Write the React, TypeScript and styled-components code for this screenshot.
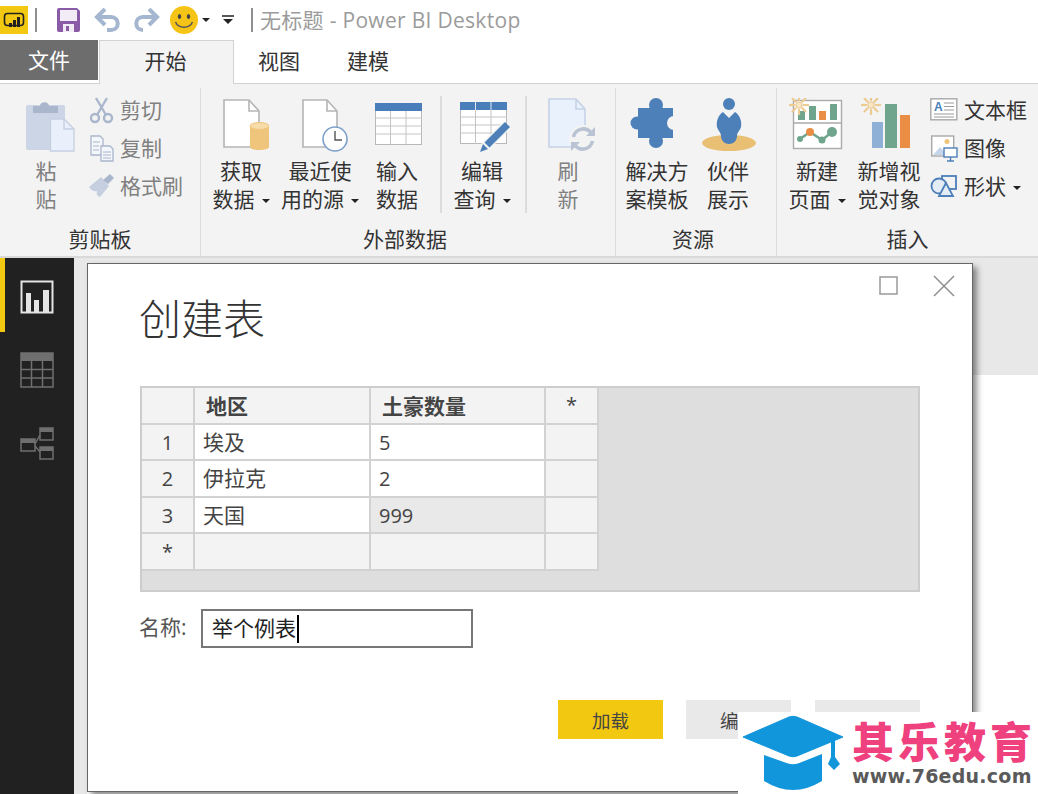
import React from "react";
import styled, { createGlobalStyle } from "styled-components";

const GlobalStyle = createGlobalStyle`
  html, body { margin: 0; padding: 0; background: #fff; }
  body { font-family: "Open Sans", "Noto Sans CJK SC", sans-serif; color: #333; }
  * { box-sizing: border-box; }
`;

const Page = styled.div`
  position: relative;
  width: 1038px;
  height: 794px;
  overflow: hidden;
  display: flex;
  flex-direction: column;
`;

/* title bar */
const TitleBar = styled.div`
  height: 40px;
  display: flex;
  align-items: center;
  background: #fff;
`;
const Slot = styled.div<{ $left: number }>`
  margin-left: ${(p) => p.$left}px;
  display: flex;
  align-items: center;
`;
const BarSep = styled.div<{ $left: number }>`
  width: 2px;
  height: 24px;
  margin-left: ${(p) => p.$left}px;
  background: #8f8f8f;
`;
const WindowTitle = styled.div`
  margin-left: 7px;
  font-size: 21px;
  letter-spacing: 0.3px;
  line-height: 28px;
  color: #9b9b9b;
  white-space: nowrap;
`;

/* tabs */
const TabRow = styled.div`
  height: 44px;
  display: flex;
  align-items: flex-start;
  border-bottom: 1px solid #d2d2d2;
`;
const FileTab = styled.div`
  width: 98px;
  height: 40px;
  background: #6d6d6d;
  color: #fff;
  font-size: 21px;
  line-height: 40px;
  text-align: center;
`;
const HomeTab = styled.div`
  width: 135px;
  height: 44px;
  margin-left: 1px;
  padding-right: 2px;
  background: #f3f3f3;
  border: 1px solid #d2d2d2;
  border-bottom: 0;
  font-size: 21px;
  line-height: 40px;
  text-align: center;
`;
const Tab = styled.div<{ $left: number }>`
  margin-left: ${(p) => p.$left}px;
  font-size: 21px;
  line-height: 42px;
`;

/* ribbon */
const Ribbon = styled.div`
  height: 172px;
  padding-top: 4px;
  display: flex;
  background: #f3f3f3;
`;
const Group = styled.section<{ $width: number; $last?: boolean }>`
  width: ${(p) => p.$width}px;
  display: flex;
  flex-direction: column;
  border-right: ${(p) => (p.$last ? "0" : "1px solid #dcdcdc")};
`;
const GroupBody = styled.div`
  flex: 1;
  padding-top: 8px;
  display: flex;
  align-items: flex-start;
`;
const GroupLabel = styled.div<{ $shift?: number }>`
  height: 28px;
  margin-bottom: 3px;
  padding-right: ${(p) => p.$shift || 0}px;
  font-size: 21px;
  line-height: 28px;
  text-align: center;
  white-space: nowrap;
`;
const BigButton = styled.div<{ $width: number; $muted?: boolean }>`
  width: ${(p) => p.$width}px;
  flex: none;
  display: flex;
  flex-direction: column;
  align-items: center;
  font-size: 21px;
  line-height: 28px;
  text-align: center;
  white-space: nowrap;
  color: ${(p) => (p.$muted ? "#808080" : "#333")};
`;
const IconBox = styled.div`
  height: 61px;
  display: flex;
  align-items: flex-start;
  padding-top: 2px;
`;
const Caret = styled.i`
  display: inline-block;
  width: 0;
  height: 0;
  margin-left: 7px;
  vertical-align: middle;
  border-left: 4px solid transparent;
  border-right: 4px solid transparent;
  border-top: 4px solid #222;
`;
const RibbonSep = styled.div<{ $left: number }>`
  width: 2px;
  height: 117px;
  margin-left: ${(p) => p.$left}px;
  background: #dcdcdc;
`;
const SmallColumn = styled.div<{ $left: number }>`
  margin-left: ${(p) => p.$left}px;
  margin-top: -6px;
  display: flex;
  flex-direction: column;
`;
const SmallRow = styled.div<{ $muted?: boolean }>`
  height: 38px;
  display: flex;
  align-items: center;
  gap: 6px;
  font-size: 21px;
  white-space: nowrap;
  color: ${(p) => (p.$muted ? "#808080" : "#333")};
  svg {
    margin-top: 2px;
  }
`;

/* work area */
const Work = styled.div`
  flex: 1;
  display: flex;
  border-top: 2px solid #d9d9d9;
`;
const Sidebar = styled.nav`
  width: 74px;
  background: #212121;
`;
const SideItem = styled.div<{ $active?: boolean }>`
  height: 73.5px;
  padding-top: 4px;
  display: flex;
  align-items: center;
  justify-content: center;
  box-shadow: ${(p) => (p.$active ? "inset 5px 0 0 #f2c811" : "none")};
`;
const Canvas = styled.div`
  flex: 1;
  padding: 117px 0 0 13px;
  background: #e8e8e8;
`;
const Sheet = styled.div`
  height: 100%;
  background: #fff;
`;

/* dialog */
const Dialog = styled.div`
  position: absolute;
  left: 87px;
  top: 263px;
  width: 886px;
  height: 529px;
  padding: 0 52px;
  background: #fff;
  border: 1px solid #666;
  box-shadow: 4px 4px 6px rgba(0, 0, 0, 0.45);
`;
const DialogControls = styled.div`
  height: 33px;
  margin-right: -35px;
  padding-top: 11px;
  display: flex;
  justify-content: flex-end;
  gap: 35px;
`;
const DialogTitle = styled.h1`
  margin: 0 0 0 -1px;
  height: 89px;
  font-size: 42px;
  font-weight: 300;
  line-height: 44px;
`;
const TableFrame = styled.div`
  width: 780px;
  height: 206px;
  background: #dedede;
  border: 2px solid #cdcdcd;
`;
const Table = styled.div`
  display: inline-grid;
  grid-template-columns: 51px 174px 173px 51px;
  grid-auto-rows: 34.5px;
  gap: 2px;
  padding-right: 2px;
  padding-bottom: 2px;
  background: #d2d2d2;
`;
const Cell = styled.div<{ $tone?: "head" | "fill" | "picked"; $center?: boolean; $bold?: boolean; $num?: boolean }>`
  padding-left: ${(p) => (p.$center ? 0 : p.$bold ? 11 : 8)}px;
  font-size: ${(p) => (p.$num ? 20 : 21)}px;
  line-height: ${(p) => (p.$bold ? 36 : p.$center ? 34 : 35)}px;
  font-weight: ${(p) => (p.$bold ? 700 : 400)};
  text-align: ${(p) => (p.$center ? "center" : "left")};
  color: #444;
  background: ${(p) =>
    p.$tone === "head" || p.$tone === "fill" ? "#f3f3f3" : p.$tone === "picked" ? "#e9e9e9" : "#fff"};
`;
const RowNo = styled(Cell).attrs({ $tone: "head", $center: true, $num: true })`
  line-height: 36px;
`;
const NameRow = styled.div`
  margin-top: 17px;
  display: flex;
  align-items: center;
  font-size: 21px;
  color: #555;
`;
const NameLabel = styled.label`
  width: 62px;
  margin-left: -1px;
  padding-bottom: 5px;
`;
const NameBox = styled.div`
  width: 272px;
  height: 39px;
  padding: 0 0 4px 9px;
  display: flex;
  align-items: center;
  border: 2px solid #777;
  font-size: 21px;
  color: #222;
`;
const TextCaret = styled.span`
  width: 2px;
  height: 28px;
  margin: 4px 0 0 1px;
  background: #000;
`;
const ButtonRow = styled.div`
  margin-top: 52px;
  width: 780px;
  display: flex;
  justify-content: flex-end;
  gap: 24px;
`;
const DialogButton = styled.button<{ $primary?: boolean }>`
  width: 105px;
  height: 39px;
  margin-right: ${(p) => (p.$primary ? -1 : 0)}px;
  padding: 0;
  border: 0;
  font-family: inherit;
  font-size: 18.5px;
  color: #444;
  background: ${(p) => (p.$primary ? "#f2c811" : "#e9e9e9")};
`;

/* watermark */
const Watermark = styled.div`
  position: absolute;
  right: 0;
  bottom: 0;
  width: 300px;
  height: 82px;
  padding-left: 5px;
  display: flex;
  gap: 7px;
  background: #fff;
`;
const BrandMark = styled.svg`
  flex: none;
`;
const BrandText = styled.div`
  padding-top: 6px;
  display: flex;
  flex-direction: column;
`;
const BrandName = styled.div`
  font-size: 42px;
  line-height: 47px;
  font-weight: 900;
  letter-spacing: 4px;
  color: #f0417f;
  white-space: nowrap;
`;
const BrandUrl = styled.div`
  font-family: "DejaVu Sans", sans-serif;
  font-size: 19px;
  line-height: 22px;
  font-weight: 700;
  letter-spacing: 0.25px;
  color: #5a5a5a;
  white-space: nowrap;
`;

const Sun = ({ x, y }: { x: number; y: number }) => (
  <g stroke="#eccb93" strokeWidth="2.2" fill="none">
    <circle cx={x} cy={y} r="3" fill="#f8e8c6" strokeWidth="1.200" />
    {[0, 45, 90, 135, 180, 225, 270, 315].map((a) => (
      <line
        key={a}
        x1={x + 4 * Math.cos((a * Math.PI) / 180)}
        y1={y + 4 * Math.sin((a * Math.PI) / 180)}
        x2={x + 10 * Math.cos((a * Math.PI) / 180)}
        y2={y + 10 * Math.sin((a * Math.PI) / 180)}
      />
    ))}
  </g>
);

const Doc = ({ d, fold, fill = "#fff", stroke = "#b5b5b5" }: { d: string; fold: string; fill?: string; stroke?: string }) => (
  <g fill={fill} stroke={stroke} strokeWidth="1.6">
    <path d={d} />
    <path d={fold} fill="none" />
  </g>
);

const Icon = ({ w = 56, h = 56, children }: { w?: number; h?: number; children: React.ReactNode }) => (
  <svg width={w} height={h} viewBox={`0 0 ${w} ${h}`}>
    {children}
  </svg>
);

const PasteIcon = () => (
  <Icon w={60}>
    <rect x="10" y="7" width="39" height="45" rx="2" fill="#ccd5e6" />
    <path d="M17 8h7c0-5 9-5 9 0h9v7H17z" fill="#aab6cb" />
    <path d="M34.500 21H48l10 10v22H34.500z" fill="#e9f0fb" stroke="#c5d0e2" strokeWidth="1.4" />
    <path d="M48 21v10h10" fill="none" stroke="#c5d0e2" strokeWidth="1.4" />
  </Icon>
);
const ScissorsIcon = () => (
  <Icon w={26} h={28}>
    <g fill="none" stroke="#a9b6cc" strokeWidth="2.4">
      <circle cx="7" cy="22" r="4" />
      <circle cx="20" cy="22" r="4" />
      <path d="M8 2l10 17M19 2L9 19" />
    </g>
  </Icon>
);
const CopyIcon = () => (
  <Icon w={26} h={28}>
    <g fill="#f3f6fb" stroke="#aab6cc" strokeWidth="1.3">
      <path d="M3 2h9l3 3v16H3z" />
      <path d="M13 12h9l3 3v12H13z" />
    </g>
    <path d="M5 8h7M5 12h6M5 16h6M15 18h8M15 21h8M15 24h8" stroke="#aab6cc" strokeWidth="1" />
  </Icon>
);
const BrushIcon = () => (
  <Icon w={26} h={28}>
    <path d="M1 15l12-10 8 9-9 11c-3-1-4-3-3-6-3 1-6-1-8-4z" fill="#c5cfe0" />
    <path d="M15 8l7-6 4 4-6 6z" fill="#aab6cc" />
  </Icon>
);
const GetDataIcon = () => (
  <Icon>
    <Doc d="M11 2H36L46 13V49H11Z" fold="M36 2V13H46" />
    <path d="M37 28v21c0 4 19 4 19 0V28z" fill="#efc57c" />
    <ellipse cx="46.500" cy="28" rx="9.500" ry="3.500" fill="#f7dba8" stroke="#efc57c" />
  </Icon>
);
const RecentIcon = () => (
  <Icon>
    <Doc d="M11 2H35L45 13V49H11Z" fold="M35 2V13H45" />
    <circle cx="43" cy="41" r="12" fill="#fff" stroke="#7ca0cb" strokeWidth="1.6" />
    <path d="M43 33v9h7" fill="none" stroke="#555" strokeWidth="1.4" />
  </Icon>
);
const TableIcon = ({ split, top }: { split?: boolean; top: number }) => (
  <g>
    <rect x="6.500" y={top + 0.5} width="46" height="41" fill="#fff" stroke="#b8b8b8" />
    <rect x="6" y={top} width="47" height="8" fill="#4a7ebb" />
    <path
      d={`M6 ${top + 15}H53M6 ${top + 23}H53M6 ${top + 31}H53M21.500 ${top + 8}V${top + 42}M37 ${top + 8}V${top + 42}`}
      stroke="#c4c4c4"
      strokeWidth="1"
    />
    {split && <path d={`M21.500 ${top}v8M37 ${top}v8`} stroke="#dfe8f3" strokeWidth="1" />}
  </g>
);
const InputDataIcon = () => (
  <Icon>
    <TableIcon top={5} />
  </Icon>
);
const EditQueryIcon = () => (
  <Icon>
    <TableIcon top={4} split />
    <path d="M31 49L53 27" stroke="#f3f3f3" strokeWidth="10" />
    <path d="M26 54l3-8 5 5zM30.500 44.500L51 24l5 5-20.500 20.500z" fill="#4d7fb8" />
  </Icon>
);
const RefreshIcon = () => (
  <Icon>
    <Doc d="M9 1H36L45 11V49H9Z" fold="M36 1V11H45" fill="#e9f1fc" stroke="#c5d2e6" />
    <circle cx="43" cy="41" r="14" fill="#f3f3f3" />
    <g fill="none" stroke="#b9c3d3" strokeWidth="3.500">
      <path d="M33.500 39a10 10 0 0 1 17-5" />
      <path d="M52.500 43a10 10 0 0 1-17 5" />
    </g>
    <path d="M55 29v9h-9zM31 53v-9h9z" fill="#b9c3d3" />
  </Icon>
);
const PuzzleIcon = () => (
  <Icon>
    <g fill="#4d7fb8">
      <rect x="9" y="10" width="35" height="30" />
      <circle cx="27" cy="7" r="7" />
      <circle cx="8" cy="25" r="6.500" />
      <circle cx="27" cy="43" r="7" />
    </g>
    <circle cx="45" cy="25" r="7" fill="#f3f3f3" />
  </Icon>
);
const PartnerIcon = () => (
  <Icon>
    <ellipse cx="29" cy="45" rx="27" ry="8" fill="#e9bf73" />
    <circle cx="29" cy="6" r="6" fill="#4d7fb8" />
    <path
      d="M23 14L29 20L35 14C40 17 42 24 41 29C40 33 37 34 37 38C37 43 33 46 29 46C25 46 21 43 21 38C21 34 18 33 17 29C16 24 18 17 23 14Z"
      fill="#4d7fb8"
    />
  </Icon>
);
const NewPageIcon = () => (
  <Icon>
    <rect x="4.500" y="2.500" width="48" height="48" fill="#fff" stroke="#aaa" strokeWidth="1.400" />
    <path d="M4 25H53" stroke="#aaa" strokeWidth="1.400" />
    <rect x="9" y="13" width="7" height="9" fill="#6fa58d" />
    <rect x="20" y="8" width="7" height="14" fill="#6fa58d" />
    <rect x="30" y="13" width="7" height="9" fill="#ea8d45" />
    <rect x="41" y="6" width="7" height="16" fill="#6fa58d" />
    <Sun x={10} y={7} />
    <path d="M11 41L21 34L33 42L43 34" fill="none" stroke="#6fa58d" strokeWidth="2.500" />
    <circle cx="11" cy="41" r="3" fill="#6fa58d" />
    <circle cx="21" cy="34" r="4" fill="#ea8d45" />
    <circle cx="33" cy="42" r="3.500" fill="#6fa58d" />
    <circle cx="43" cy="34" r="5" fill="#6fa58d" />
  </Icon>
);
const NewVisualIcon = () => (
  <Icon>
    <rect x="11" y="24" width="11" height="26" fill="#8fb0d6" />
    <rect x="24" y="6" width="12" height="44" fill="#6fa58d" />
    <rect x="39" y="17" width="10" height="33" fill="#ea8d45" />
    <Sun x={10} y={7} />
  </Icon>
);
const TextBoxIcon = () => (
  <Icon w={28} h={28}>
    <rect x="0.800" y="2.800" width="26" height="21" fill="#fff" stroke="#a8a8a8" strokeWidth="1.400" />
    <text x="4" y="15" fontSize="12" fontWeight="700" fill="#4a7ebb" fontFamily="Liberation Sans, sans-serif">
      A
    </text>
    <path d="M14 7h10M14 10.500h10M14 14h10M4 18h20M4 21h20" stroke="#9a9a9a" strokeWidth="1" />
  </Icon>
);
const PictureIcon = () => (
  <Icon w={28} h={28}>
    <rect x="1.700" y="2" width="22" height="20" fill="#fff" stroke="#a8a8a8" strokeWidth="1.400" />
    <circle cx="17" cy="7.500" r="2.500" fill="#efc57c" />
    <path d="M3 21l7-8 7 8z" fill="#c5d5ea" />
    <rect x="14" y="14" width="13" height="9" fill="#fff" stroke="#4d7fb8" strokeWidth="1.400" />
    <path d="M20.500 23v3.500M17 27h7" stroke="#4d7fb8" strokeWidth="1.400" />
  </Icon>
);
const ShapesIcon = () => (
  <Icon w={28} h={28}>
    <g fill="none" stroke="#4d7fb8" strokeWidth="1.800">
      <rect x="12" y="4" width="14" height="13" />
      <circle cx="9" cy="14" r="7.500" fill="#e4ecf6" />
      <path d="M16 11l7 13H9z" fill="#e4ecf6" />
    </g>
  </Icon>
);

const ReportIcon = () => (
  <Icon w={34} h={34}>
    <rect x="1.500" y="1.500" width="31" height="31" fill="none" stroke="#e4e4e4" strokeWidth="2" />
    <path d="M6 32V13h5v19zM14 32V20h5v12zM23 32V10h6v22z" fill="#e4e4e4" />
  </Icon>
);
const DataIcon = () => (
  <Icon w={34} h={36}>
    <rect x="1" y="1" width="32" height="34" fill="none" stroke="#6f6f6f" strokeWidth="1.500" />
    <rect x="1" y="1" width="32" height="8" fill="#6f6f6f" />
    <path d="M1 17.500H33M1 26H33M11.500 9V35M22.500 9V35" stroke="#6f6f6f" strokeWidth="1.500" />
  </Icon>
);
const ModelIcon = () => (
  <Icon w={34} h={34}>
    <g fill="none" stroke="#6f6f6f" strokeWidth="1.500">
      <rect x="1" y="12" width="14" height="12" />
      <rect x="20" y="1" width="13" height="12" />
      <rect x="20" y="20" width="13" height="12" />
      <path d="M15 17L20 8M15 19L20 25" />
    </g>
    <path d="M1 12h14v4H1zM20 1h13v4H20zM20 20h13v4H20z" fill="#6f6f6f" />
  </Icon>
);

const App = () => (
  <>
    <GlobalStyle />
    <Page>
      <TitleBar>
        <Icon w={28} h={28}>
          <rect width="28" height="28" fill="#f2c811" />
          <rect x="4.500" y="7.500" width="19" height="12" rx="3" fill="none" stroke="#222" strokeWidth="1.600" />
          <path d="M9 21v-4h3v4zM13 21v-7h3v7zM17 21v-10h3v10z" fill="#222" />
        </Icon>
        <BarSep $left={7} />
        <Slot $left={20}>
          <Icon w={24} h={24}>
            <path d="M0 2a2 2 0 0 1 2-2h18l3 3v19a2 2 0 0 1-2 2H2a2 2 0 0 1-2-2z" fill="#8a5ca8" />
            <rect x="3" y="2" width="17" height="11" fill="#f1ecf5" />
            <rect x="6" y="16" width="11" height="8" fill="#f1ecf5" />
            <rect x="9" y="18" width="3" height="5" fill="#8a5ca8" />
          </Icon>
        </Slot>
        <Slot $left={13}>
          <Icon w={27} h={24}>
            <path d="M4 9h13c9 0 9 13 0 13h-4" fill="none" stroke="#a5b6d0" strokeWidth="4" />
            <path d="M11 1L3 9l8 8" fill="none" stroke="#a5b6d0" strokeWidth="4" />
          </Icon>
        </Slot>
        <Slot $left={12}>
          <Icon w={27} h={24}>
            <path d="M23 9H10c-9 0-9 13 0 13" fill="none" stroke="#a5b6d0" strokeWidth="4" />
            <path d="M16 1l8 8-8 8" fill="none" stroke="#a5b6d0" strokeWidth="4" />
          </Icon>
        </Slot>
        <Slot $left={10}>
          <Icon w={28} h={28}>
            <circle cx="14" cy="14" r="14" fill="#f6c417" />
            <ellipse cx="9.500" cy="10.500" rx="1.700" ry="2.500" fill="#444" />
            <ellipse cx="18.500" cy="10.500" rx="1.700" ry="2.500" fill="#444" />
            <path d="M5.500 16c3 7 14 7 17 0" fill="none" stroke="#555" strokeWidth="1.500" />
          </Icon>
        </Slot>
        <Slot $left={-3}>
          <Caret />
        </Slot>
        <Slot $left={12}>
          <Icon w={12} h={10}>
            <path d="M0 1h12" stroke="#222" strokeWidth="1.500" />
            <path d="M1 4h10l-5 5z" fill="#222" />
          </Icon>
        </Slot>
        <BarSep $left={17} />
        <WindowTitle>无标题 - Power BI Desktop</WindowTitle>
      </TitleBar>

      <TabRow>
        <FileTab>文件</FileTab>
        <HomeTab>开始</HomeTab>
        <Tab $left={24}>视图</Tab>
        <Tab $left={47}>建模</Tab>
      </TabRow>

      <Ribbon>
        <Group $width={201}>
          <GroupBody>
            <BigButton $width={92} $muted>
              <IconBox>
                <PasteIcon />
              </IconBox>
              粘<br />贴
            </BigButton>
            <SmallColumn $left={-4}>
              <SmallRow $muted>
                <ScissorsIcon />剪切
              </SmallRow>
              <SmallRow $muted>
                <CopyIcon />复制
              </SmallRow>
              <SmallRow $muted>
                <BrushIcon />格式刷
              </SmallRow>
            </SmallColumn>
          </GroupBody>
          <GroupLabel>剪贴板</GroupLabel>
        </Group>

        <Group $width={415}>
          <GroupBody>
            <BigButton $width={80}>
              <IconBox>
                <GetDataIcon />
              </IconBox>
              获取
              <br />
              <span>
                数据
                <Caret />
              </span>
            </BigButton>
            <BigButton $width={78}>
              <IconBox>
                <RecentIcon />
              </IconBox>
              最近使
              <br />
              <span>
                用的源
                <Caret />
              </span>
            </BigButton>
            <BigButton $width={76}>
              <IconBox>
                <InputDataIcon />
              </IconBox>
              输入
              <br />
              数据
            </BigButton>
            <RibbonSep $left={5} />
            <BigButton $width={80}>
              <IconBox>
                <EditQueryIcon />
              </IconBox>
              编辑
              <br />
              <span>
                查询
                <Caret />
              </span>
            </BigButton>
            <RibbonSep $left={3} />
            <BigButton $width={82} $muted>
              <IconBox>
                <RefreshIcon />
              </IconBox>
              刷
              <br />
              新
            </BigButton>
          </GroupBody>
          <GroupLabel $shift={6}>外部数据</GroupLabel>
        </Group>

        <Group $width={161}>
          <GroupBody>
            <BigButton $width={82}>
              <IconBox>
                <PuzzleIcon />
              </IconBox>
              解决方
              <br />
              案模板
            </BigButton>
            <BigButton $width={60}>
              <IconBox>
                <PartnerIcon />
              </IconBox>
              伙伴
              <br />
              展示
            </BigButton>
          </GroupBody>
          <GroupLabel $shift={6}>资源</GroupLabel>
        </Group>

        <Group $width={261} $last>
          <GroupBody>
            <BigButton $width={80}>
              <IconBox>
                <NewPageIcon />
              </IconBox>
              新建
              <br />
              <span>
                页面
                <Caret />
              </span>
            </BigButton>
            <BigButton $width={64}>
              <IconBox>
                <NewVisualIcon />
              </IconBox>
              新增视
              <br />
              觉对象
            </BigButton>
            <SmallColumn $left={9}>
              <SmallRow>
                <TextBoxIcon />文本框
              </SmallRow>
              <SmallRow>
                <PictureIcon />图像
              </SmallRow>
              <SmallRow>
                <ShapesIcon />
                <span>
                  形状
                  <Caret />
                </span>
              </SmallRow>
            </SmallColumn>
          </GroupBody>
          <GroupLabel>插入</GroupLabel>
        </Group>
      </Ribbon>

      <Work>
        <Sidebar>
          <SideItem $active>
            <ReportIcon />
          </SideItem>
          <SideItem>
            <DataIcon />
          </SideItem>
          <SideItem>
            <ModelIcon />
          </SideItem>
        </Sidebar>
        <Canvas>
          <Sheet />
        </Canvas>
      </Work>

      <Dialog>
        <DialogControls>
          <Icon w={19} h={20}>
            <rect x="1" y="2" width="17" height="17" fill="none" stroke="#9a9a9a" strokeWidth="1.500" />
          </Icon>
          <Icon w={22} h={22}>
            <path d="M1 1l20 20M21 1L1 21" stroke="#8f8f8f" strokeWidth="1.500" />
          </Icon>
        </DialogControls>
        <DialogTitle>创建表</DialogTitle>
        <TableFrame>
          <Table>
            <Cell $tone="head" />
            <Cell $tone="head" $bold>地区</Cell>
            <Cell $tone="head" $bold>土豪数量</Cell>
            <Cell $tone="head" $center $num>*</Cell>

            <RowNo>1</RowNo>
            <Cell>埃及</Cell>
            <Cell $num>5</Cell>
            <Cell $tone="fill" />

            <RowNo>2</RowNo>
            <Cell>伊拉克</Cell>
            <Cell $num>2</Cell>
            <Cell $tone="fill" />

            <RowNo>3</RowNo>
            <Cell>天国</Cell>
            <Cell $tone="picked" $num>999</Cell>
            <Cell $tone="fill" />

            <RowNo>*</RowNo>
            <Cell $tone="fill" />
            <Cell $tone="fill" />
            <Cell $tone="fill" />
          </Table>
        </TableFrame>
        <NameRow>
          <NameLabel>名称:</NameLabel>
          <NameBox>
            举个例表
            <TextCaret />
          </NameBox>
        </NameRow>
        <ButtonRow>
          <DialogButton $primary>加载</DialogButton>
          <DialogButton>编辑</DialogButton>
          <DialogButton>取消</DialogButton>
        </ButtonRow>
      </Dialog>

      <Watermark>
        <BrandMark width="102" height="82" viewBox="0 0 102 82">
          <path d="M0 25 L46 5 Q50 3.500 54 5 L100 25 L54 44 Q50 45.500 46 44 Z" fill="#1296db" stroke="#1296db" strokeLinejoin="round" />
          <path d="M21 43L45 51.500Q50 53 55 51.500L79 42V69Q50 87 21 69Z" fill="#1296db" />
          <path d="M88 28h4v17l5 7-6 6-6-6 3-7z" fill="#1296db" />
        </BrandMark>
        <BrandText>
          <BrandName>其乐教育</BrandName>
          <BrandUrl>www.76edu.com</BrandUrl>
        </BrandText>
      </Watermark>
    </Page>
  </>
);

export default App;
